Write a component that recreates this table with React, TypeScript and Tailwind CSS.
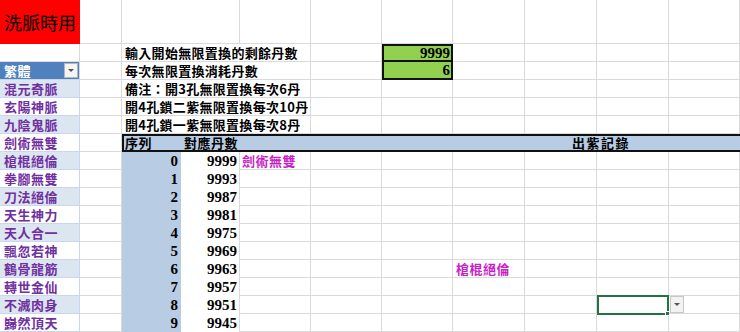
const CJK = "font-['Noto_Sans_CJK_TC','Noto_Sans_CJK_SC',sans-serif]";
const NUM = "font-['Liberation_Serif',serif]";
const GRID = "border-r border-b border-[#dadada]";

const names = [
  "混元奇脈",
  "玄陽神脈",
  "九陰鬼脈",
  "劍術無雙",
  "槍棍絕倫",
  "拳腳無雙",
  "刀法絕倫",
  "天生神力",
  "天人合一",
  "飄忽若神",
  "鶴骨龍筋",
  "轉世金仙",
  "不滅肉身",
  "巋然頂天",
];

function Name({ i }: { i: number }) {
  const band = i % 2 === 0 ? "bg-[#dce6f1]" : "bg-white";
  return (
    <div
      className={`w-[80px] shrink-0 border-r border-b border-[#c9d7ea] ${band} pl-[4px] flex items-center text-[13px] font-bold text-[#7030a0] tracking-[0.5px] whitespace-nowrap`}
    >
      {names[i]}
    </div>
  );
}

// empty gridline cells for columns F..K (or E..K)
function Tail({ fromE = false }: { fromE?: boolean }) {
  return (
    <>
      {fromE && <div className={`w-[71px] shrink-0 ${GRID}`} />}
      <div className={`w-[71px] shrink-0 ${GRID}`} />
      <div className={`w-[71px] shrink-0 ${GRID}`} />
      <div className={`w-[72px] shrink-0 ${GRID}`} />
      <div className={`w-[72px] shrink-0 ${GRID}`} />
      <div className={`w-[72px] shrink-0 ${GRID}`} />
      <div className={`w-[71px] shrink-0 ${GRID}`} />
    </>
  );
}

function NoteRow({
  name,
  text,
  green,
}: {
  name: React.ReactNode;
  text: string;
  green?: React.ReactNode;
}) {
  return (
    <div className="flex h-[18px]">
      {name}
      <div className={`w-[42px] shrink-0 ${GRID}`} />
      <div
        className={`w-[189px] shrink-0 ${GRID} pl-[3px] flex items-center text-[13px] font-bold text-black tracking-[0.3px] whitespace-nowrap`}
      >
        {text}
      </div>
      <div className={`w-[71px] shrink-0 ${GRID}`} />
      {green ?? <div className={`w-[71px] shrink-0 ${GRID}`} />}
      <div className={`w-[72px] shrink-0 ${GRID}`} />
      <div className={`w-[72px] shrink-0 ${GRID}`} />
      <div className={`w-[72px] shrink-0 ${GRID}`} />
      <div className={`w-[71px] shrink-0 ${GRID}`} />
    </div>
  );
}

export default function App() {
  const pink = "text-[13px] font-bold text-[#c81ec8] tracking-[0.5px] whitespace-nowrap";

  return (
    <div className={`w-[740px] h-[332px] overflow-hidden bg-white ${CJK}`}>
      {/* row 1 */}
      <div className="flex h-[44px]">
        <div className="w-[80px] shrink-0 bg-[#ff0000] flex items-center pl-[4px] text-[18px] font-normal text-black whitespace-nowrap">
          洗脈時用
        </div>
        <div className={`w-[42px] shrink-0 ${GRID}`} />
        <div className={`w-[118px] shrink-0 ${GRID}`} />
        <Tail fromE />
      </div>

      {/* rows 2-6 */}
      <NoteRow
        name={<div className={`w-[80px] shrink-0 ${GRID}`} />}
        text="輸入開始無限置換的剩餘丹數"
        green={
          <div className={`w-[71px] shrink-0 bg-[#92d050] border-2 border-[#111] flex items-center justify-end pr-[1px] ${NUM} text-[15px] font-bold`}>
            9999
          </div>
        }
      />
      <NoteRow
        name={
          <div className="w-[80px] shrink-0 bg-[#4f81bd] border-r border-b border-[#c9d7ea] pl-[4px] flex items-center justify-between text-[13px] font-bold text-white tracking-[0.5px]">
            繁體
            <div className="w-[14px] h-[15px] mr-[1px] bg-[#f4f4f4] border border-[#b5b5b5] flex items-center justify-center">
              <div className="w-0 h-0 border-l-[3px] border-r-[3px] border-t-[3px] border-l-transparent border-r-transparent border-t-[#555]" />
            </div>
          </div>
        }
        text="每次無限置換消耗丹數"
        green={
          <div className={`w-[71px] shrink-0 bg-[#92d050] border-x-2 border-b-2 border-[#111] flex items-center justify-end pr-[1px] ${NUM} text-[15px] font-bold`}>
            6
          </div>
        }
      />
      <NoteRow name={<Name i={0} />} text="備注：開3孔無限置換每次6丹" />
      <NoteRow name={<Name i={1} />} text="開4孔鎖二紫無限置換每次10丹" />
      <NoteRow name={<Name i={2} />} text="開4孔鎖一紫無限置換每次8丹" />

      {/* row 7: table header */}
      <div className="flex h-[18px]">
        <Name i={3} />
        <div className={`w-[42px] shrink-0 ${GRID}`} />
        <div className="w-[618px] shrink-0 flex bg-[#b8cce4] border-t-2 border-b-2 border-l-2 border-[#111] text-[13px] font-bold text-black tracking-[0.5px]">
          <div className="w-[57px] shrink-0 pl-[1px] flex items-center">序列</div>
          <div className="w-[59px] shrink-0 pl-[3px] flex items-center">對應丹數</div>
          <div className="flex-1 pl-[332px] flex items-center tracking-[1.5px]">出紫記錄</div>
        </div>
      </div>

      {/* rows 8-17 */}
      {Array.from({ length: 10 }).map((_, k) => (
        <div key={k} className="flex h-[18px]">
          <Name i={4 + k} />
          <div className={`w-[42px] shrink-0 ${GRID}`} />
          <div className={`w-[59px] shrink-0 bg-[#b8cce4] flex items-center justify-end pr-[3px] ${NUM} text-[15px] font-bold`}>
            {k}
          </div>
          <div className={`w-[59px] shrink-0 border-r border-[#dadada] flex items-center justify-end pr-[2px] ${NUM} text-[15px] font-bold`}>
            {9999 - 6 * k}
          </div>
          <div className={`w-[71px] shrink-0 ${GRID} pl-[2px] flex items-center ${pink}`}>
            {k === 0 ? "劍術無雙" : null}
          </div>
          <div className={`w-[71px] shrink-0 ${GRID}`} />
          <div className={`w-[71px] shrink-0 ${GRID}`} />
          <div className={`w-[72px] shrink-0 ${GRID} pl-[3px] flex items-center ${pink}`}>
            {k === 6 ? "槍棍絕倫" : null}
          </div>
          <div className={`w-[72px] shrink-0 ${GRID}`} />
          {k === 8 ? (
            <div className="w-[72px] shrink-0 relative border-2 border-[#217346] -mt-[1px] h-[20px]">
              <div className="absolute -right-[3px] -bottom-[3px] w-[5px] h-[5px] bg-[#217346] border border-white" />
            </div>
          ) : (
            <div className={`w-[72px] shrink-0 ${GRID}`} />
          )}
          <div className={`w-[71px] shrink-0 ${GRID} relative`}>
            {k === 8 && (
              <div className="absolute left-[1px] top-[0px] w-[14px] h-[17px] bg-[#f2f2f2] border border-[#c8c8c8] flex items-center justify-center">
                <div className="w-0 h-0 border-l-[3px] border-r-[3px] border-t-[3px] border-l-transparent border-r-transparent border-t-[#555]" />
              </div>
            )}
          </div>
        </div>
      ))}
    </div>
  );
}
